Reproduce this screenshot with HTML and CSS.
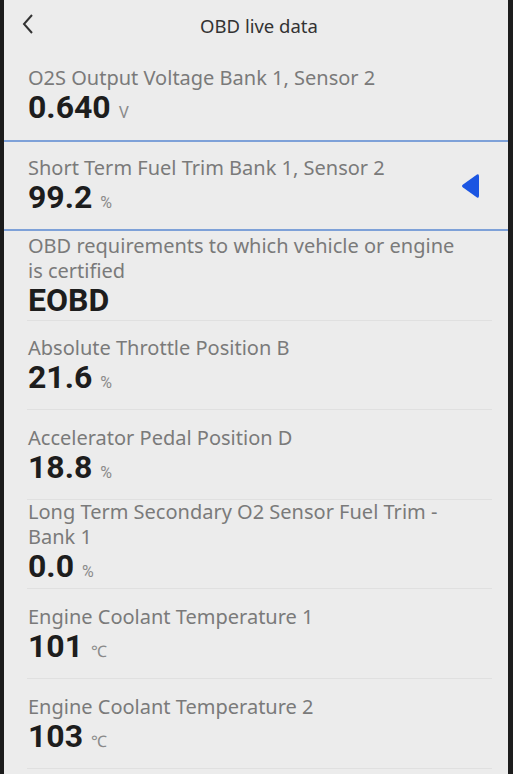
FILE: index.html
```html
<!DOCTYPE html>
<html lang="en">
<head>
    <meta charset="UTF-8">
    <meta name="viewport" content="width=device-width, initial-scale=1.0">
    <title>OBD live data</title>
    <link rel="stylesheet" href="styles.css">
</head>
<body>
    <div class="screen">
        <div class="header">
            <span class="back">
                <svg width="14" height="22" viewBox="0 0 14 22"><path d="M11 2 L3 11 L11 20" fill="none" stroke="#333" stroke-width="2"/></svg>
            </span>
            <h1>OBD live data</h1>
        </div>

        <div class="list">
            <div class="row no-line">
                <div class="label">O2S Output Voltage Bank 1, Sensor 2</div>
                <div class="value">0.640 <span class="unit">V</span></div>
            </div>
            <div class="row active">
                <div>
                    <div class="label">Short Term Fuel Trim Bank 1, Sensor 2</div>
                    <div class="value">99.2 <span class="unit">%</span></div>
                </div>
                <svg class="marker" width="20" height="26" viewBox="0 0 20 26"><path d="M17 1.5 Q19 0.5 19 3.5 L19 22.5 Q19 25.5 17 24.5 L3 14.5 Q1 13 3 11.5 Z" fill="#1b55e2"/></svg>
            </div>
            <div class="row two-lines">
                <div class="label">OBD requirements to which vehicle or engine is certified</div>
                <div class="value">EOBD</div>
            </div>
            <div class="row">
                <div class="label">Absolute Throttle Position B</div>
                <div class="value">21.6 <span class="unit">%</span></div>
            </div>
            <div class="row">
                <div class="label">Accelerator Pedal Position D</div>
                <div class="value">18.8 <span class="unit">%</span></div>
            </div>
            <div class="row two-lines">
                <div class="label">Long Term Secondary O2 Sensor Fuel Trim - Bank 1</div>
                <div class="value">0.0 <span class="unit">%</span></div>
            </div>
            <div class="row">
                <div class="label">Engine Coolant Temperature 1</div>
                <div class="value">101 <span class="unit">&#8451;</span></div>
            </div>
            <div class="row">
                <div class="label">Engine Coolant Temperature 2</div>
                <div class="value">103 <span class="unit">&#8451;</span></div>
            </div>
        </div>
    </div>
</body>
</html>
```

FILE: styles.css
```css
/* Page */
body {
    margin: 0;
    background-color: #1c1c1c;
    font-family: "Noto Sans", Roboto, sans-serif;
}

.screen {
    margin: 0 5px 0 4px;
    height: 774px;
    overflow: hidden;
    background-color: #ececec;
}

/* Header */
.header {
    height: 50px;
    padding-left: 6px;
    display: flex;
    align-items: center;
    justify-content: center;
    position: relative;
}

.back {
    position: absolute;
    left: 17px;
    top: 13px;
}

h1 {
    margin: 0;
    font-size: 18.5px;
    font-weight: normal;
    color: #333;
}

/* Rows */
.row {
    height: 89.6px;
    margin: 0 16px 0 23px;
    padding: 6px 0 0 1px;
    border-bottom: 1px solid #e0e0e0;
    display: flex;
    flex-direction: column;
    justify-content: center;
    box-sizing: border-box;
}

.row.two-lines {
    padding-top: 0;
}

.row.no-line {
    border-bottom: none;
    height: 90px;
    padding-top: 4px;
}

.row.active {
    margin: 0;
    padding: 4px 28px 0 24px;
    border-top: 2px solid #7ea1d8;
    border-bottom: 2px solid #7ea1d8;
    flex-direction: row;
    align-items: center;
    justify-content: space-between;
    height: 91px;
}

.label {
    max-width: 430px;
    font-size: 20px;
    line-height: 25px;
    color: #7a7a7a;
}

.value {
    font-family: Roboto, "Noto Sans", sans-serif;
    font-size: 32px;
    font-weight: bold;
    line-height: 34px;
    color: #1d1d1d;
}

.unit {
    font-size: 16px;
    font-weight: normal;
    color: #8a8a8a;
}

.marker {
    margin-top: -4px;
}
```
